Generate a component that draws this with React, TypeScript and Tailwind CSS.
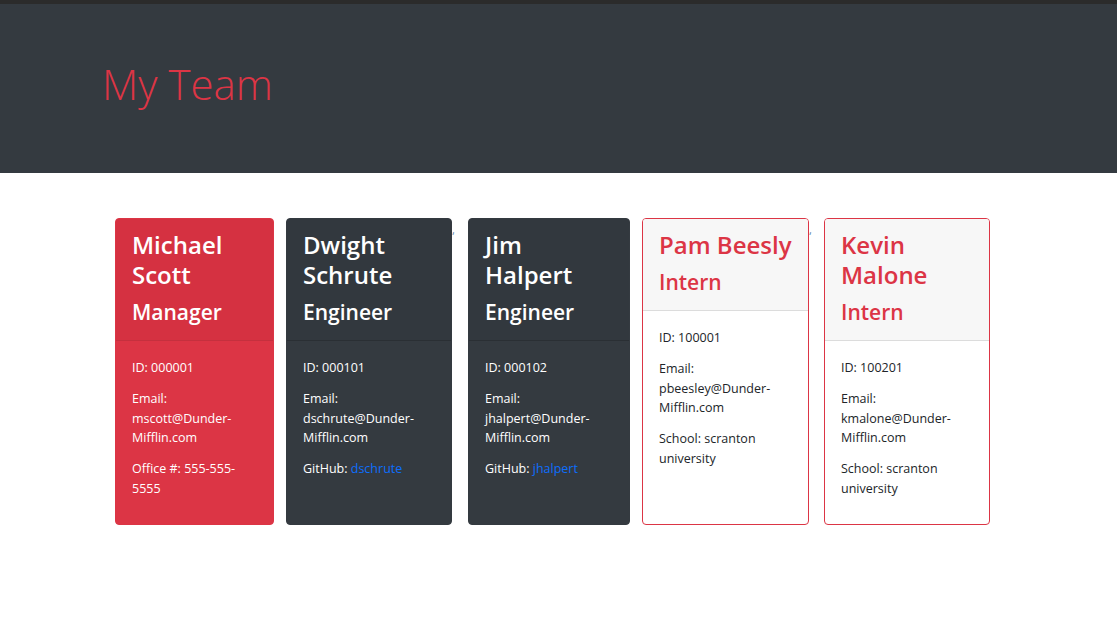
import React from "react";

type Member = {
  name: string;
  role: string;
  id: string;
  email: string;
  extra: { label: string; value: string; link?: boolean };
  theme: "red" | "dark" | "light";
  width: string;
  comma?: string;
  nowrap?: boolean;
};

const TEAM: Member[] = [
  {
    name: "Michael Scott",
    role: "Manager",
    id: "000001",
    email: "mscott@Dunder-Mifflin.com",
    extra: { label: "Office #:", value: "555-555-5555" },
    theme: "red",
    width: "w-[159px] mr-[12px]",
  },
  {
    name: "Dwight Schrute",
    role: "Engineer",
    id: "000101",
    email: "dschrute@Dunder-Mifflin.com",
    extra: { label: "GitHub:", value: "dschrute", link: true },
    theme: "dark",
    width: "w-[166px]",
    comma: "mr-[12px]",
  },
  {
    name: "Jim Halpert",
    role: "Engineer",
    id: "000102",
    email: "jhalpert@Dunder-Mifflin.com",
    extra: { label: "GitHub:", value: "jhalpert", link: true },
    theme: "dark",
    width: "w-[162px] mr-[12px]",
  },
  {
    name: "Pam Beesly",
    role: "Intern",
    id: "100001",
    email: "pbeesley@Dunder-Mifflin.com",
    extra: { label: "School:", value: "scranton university" },
    theme: "light",
    width: "w-[167px]",
    comma: "mr-[11px]",
    nowrap: true,
  },
  {
    name: "Kevin Malone",
    role: "Intern",
    id: "100201",
    email: "kmalone@Dunder-Mifflin.com",
    extra: { label: "School:", value: "scranton university" },
    theme: "light",
    width: "w-[166px]",
  },
];

const THEMES = {
  red: {
    card: "bg-[#dc3545] border-[#dc3545] text-white",
    header: "bg-[#d53141] border-[#c5303e] text-white",
    body: "text-white",
  },
  dark: {
    card: "bg-[#343a40] border-[#343a40] text-white",
    header: "bg-[#32383e] border-[#2a2f34] text-white",
    body: "text-white",
  },
  light: {
    card: "bg-white border-[#dc3545]",
    header: "bg-[#f7f7f7] border-[#dcdcdc] text-[#dc3545]",
    body: "text-[#212529]",
  },
};

function Card({ m }: { m: Member }) {
  const t = THEMES[m.theme];
  const [user, domain] = m.email.split("-");
  return (
    <div className={`flex h-[307px] shrink-0 flex-col rounded-[4px] border ${t.card} ${m.width}`}>
      <div className={`rounded-t-[3px] border-b px-4 pt-[11px] pb-[15px] ${t.header}`}>
        <h2
          className={`mb-[9px] text-[24px] font-semibold leading-[30px] ${
            m.nowrap ? "whitespace-nowrap" : ""
          }`}
        >
          {m.name}
        </h2>
        <h3 className="text-[21px] font-semibold leading-[26px]">{m.role}</h3>
      </div>
      <div className={`px-4 pt-[17px] text-[12.5px] leading-[19.5px] ${t.body}`}>
        <p className="mb-[11.5px]">ID: {m.id}</p>
        <p className="mb-[11.5px]">
          Email:
          <br />
          {user}-
          <br />
          {domain}
        </p>
        <p className="mb-[11.5px]">
          {m.extra.label}{" "}
          {m.extra.link ? (
            <a className="text-[#0d6efd]" href="#">
              {m.extra.value}
            </a>
          ) : (
            m.extra.value
          )}
        </p>
      </div>
    </div>
  );
}

export default function App() {
  return (
    <div className="min-h-[628px] bg-white font-['Open_Sans',sans-serif]">
      <div className="h-[4px] bg-[#2b2b2b]" />
      <header className="flex h-[169px] items-center bg-[#343a40] pl-[102px] pb-[10px]">
        <h1 className="text-[42px] font-light leading-none text-[#dc3545]">My Team</h1>
      </header>
      <main className="flex items-start pt-[45px] pl-[115px]">
        {TEAM.map((m) => (
          <React.Fragment key={m.id}>
            <Card m={m} />
            {m.comma && (
              <span
                className={`w-[4px] shrink-0 pt-[6px] text-[11px] leading-none text-[#5b7fa8] ${m.comma}`}
              >
                ,
              </span>
            )}
          </React.Fragment>
        ))}
      </main>
    </div>
  );
}
